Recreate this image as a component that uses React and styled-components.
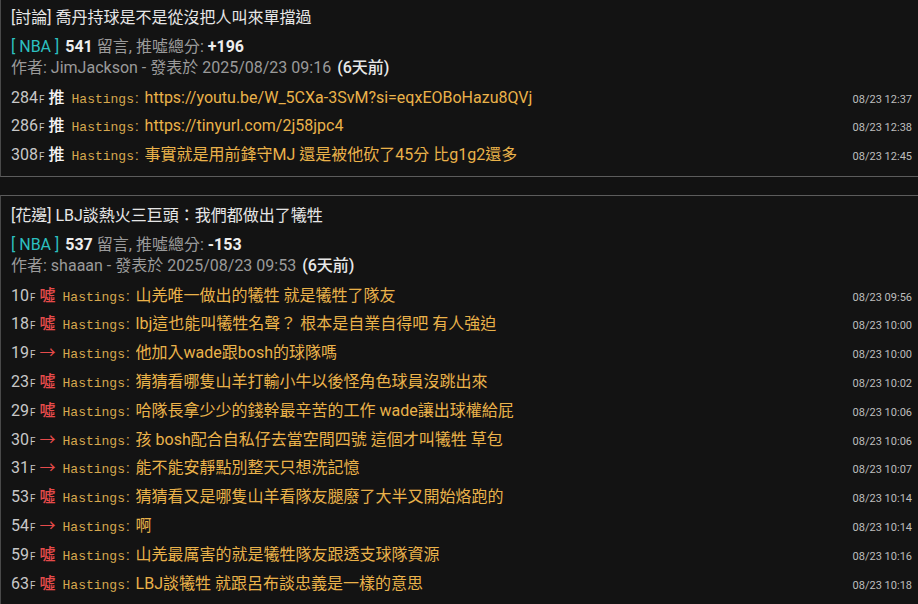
import React from 'react';
import styled, { createGlobalStyle } from 'styled-components';

const GlobalStyle = createGlobalStyle`
  html, body {
    margin: 0;
    padding: 0;
    background: #121212;
    overflow: hidden;
  }
  body {
    font-family: Roboto, "Noto Sans CJK TC", sans-serif;
  }
`;

const Page = styled.div`
  display: flex;
  flex-direction: column;
  gap: 18px;
  margin-top: -3px;
`;

const Card = styled.section`
  border: 1px solid #5c5c5c;
  border-left-color: #4a4a4a;
  border-right: 0;
  background: #131313;
  padding: 8px 6px 6px 10px;
`;

const Title = styled.div`
  color: #e6e6e6;
  font-size: 16px;
  line-height: 24px;
  margin-bottom: 6px;
`;

const Meta = styled.div`
  font-size: 16px;
  line-height: 22px;
  color: #9a9a9a;
`;

const Board = styled.span`
  color: #2cc0c0;
  margin-right: 6px;
`;

const Strong = styled.span`
  color: #eeeeee;
  font-weight: 700;
`;

const Author = styled.div`
  font-size: 16px;
  line-height: 20px;
  color: #9a9a9a;
  margin-bottom: 5.6px;
`;

const Ago = styled.span`
  color: #e8e8e8;
  font-weight: 500;
  margin-left: 6px;
`;

const Row = styled.div`
  display: flex;
  align-items: baseline;
  height: 28.8px;
  line-height: 28.8px;
  white-space: nowrap;
`;

const Floor = styled.span`
  color: #c8c8c8;
  font-size: 16px;
  margin-right: 4px;
  small {
    font-size: 10px;
    margin-left: 1px;
  }
`;

const Tag = styled.span`
  font-size: 16px;
  font-weight: ${({ $kind }) => ($kind === '→' ? 400 : 500)};
  color: ${({ $kind }) => ($kind === '推' ? '#f4f4f4' : '#e64b4b')};
  margin-right: 7px;
`;

const User = styled.span`
  font-family: "Liberation Mono", "Courier New", monospace;
  font-size: 13px;
  color: #d6a84e;
`;

const Colon = styled.span`
  color: #d6a84e;
  font-size: 15px;
  margin: 0 6px 0 1px;
`;

const Content = styled.span`
  flex: 1;
  color: #eab24a;
  font-size: 16px;
  overflow: hidden;
`;

const Time = styled.span`
  color: #bdbdbd;
  font-size: 11px;
`;

const posts = [
  {
    title: '[討論] 喬丹持球是不是從沒把人叫來單擋過',
    count: 541,
    score: '+196',
    author: 'JimJackson',
    date: '2025/08/23 09:16',
    comments: [
      ['284', '推', 'https://youtu.be/W_5CXa-3SvM?si=eqxEOBoHazu8QVj', '08/23 12:37'],
      ['286', '推', 'https://tinyurl.com/2j58jpc4', '08/23 12:38'],
      ['308', '推', '事實就是用前鋒守MJ 還是被他砍了45分 比g1g2還多', '08/23 12:45'],
    ],
  },
  {
    title: '[花邊] LBJ談熱火三巨頭：我們都做出了犧牲',
    count: 537,
    score: '-153',
    author: 'shaaan',
    date: '2025/08/23 09:53',
    comments: [
      ['10', '噓', '山羌唯一做出的犧牲 就是犧牲了隊友', '08/23 09:56'],
      ['18', '噓', 'lbj這也能叫犧牲名聲？ 根本是自業自得吧 有人強迫', '08/23 10:00'],
      ['19', '→', '他加入wade跟bosh的球隊嗎', '08/23 10:00'],
      ['23', '噓', '猜猜看哪隻山羊打輸小牛以後怪角色球員沒跳出來', '08/23 10:02'],
      ['29', '噓', '哈隊長拿少少的錢幹最辛苦的工作 wade讓出球權給屁', '08/23 10:06'],
      ['30', '→', '孩 bosh配合自私仔去當空間四號 這個才叫犧牲 草包', '08/23 10:06'],
      ['31', '→', '能不能安靜點別整天只想洗記憶', '08/23 10:07'],
      ['53', '噓', '猜猜看又是哪隻山羊看隊友腿廢了大半又開始烙跑的', '08/23 10:14'],
      ['54', '→', '啊', '08/23 10:14'],
      ['59', '噓', '山羌最厲害的就是犧牲隊友跟透支球隊資源', '08/23 10:16'],
      ['63', '噓', 'LBJ談犧牲 就跟呂布談忠義是一樣的意思', '08/23 10:18'],
    ],
  },
];

function Comment({ floor, tag, text, time }) {
  return (
    <Row>
      <Floor>
        {floor}
        <small>F</small>
      </Floor>
      <Tag $kind={tag}>{tag}</Tag>
      <User>Hastings</User>
      <Colon>:</Colon>
      <Content>{text}</Content>
      <Time>{time}</Time>
    </Row>
  );
}

export default function App() {
  return (
    <>
      <GlobalStyle />
      <Page>
        {posts.map((p) => (
          <Card key={p.title}>
            <Title>{p.title}</Title>
            <Meta>
              <Board>[ NBA ]</Board>
              <Strong>{p.count}</Strong> 留言, 推噓總分: <Strong>{p.score}</Strong>
            </Meta>
            <Author>
              作者: {p.author} - 發表於 {p.date}
              <Ago>(6天前)</Ago>
            </Author>
            {p.comments.map(([floor, tag, text, time]) => (
              <Comment key={floor} floor={floor} tag={tag} text={text} time={time} />
            ))}
          </Card>
        ))}
      </Page>
    </>
  );
}
